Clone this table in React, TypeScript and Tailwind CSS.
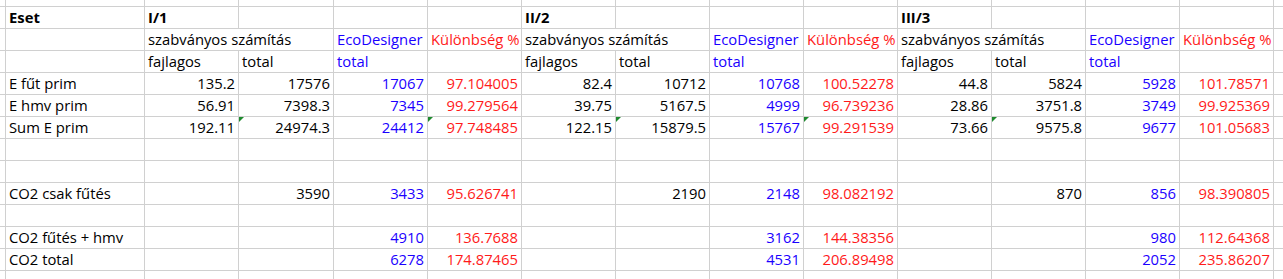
import React from "react";

type Cell = { t?: string; c?: "k" | "b" | "r"; a?: "l" | "r"; bold?: boolean; span?: number; tri?: boolean };

const B = "b";
const R = "r";

const L = (t: string, c: "k" | "b" | "r" = "k", bold = false): Cell => ({ t, c, a: "l", bold });
const N = (t: string, c: "k" | "b" | "r" = "k", tri = false): Cell => ({ t, c, a: "r", tri });
const E: Cell = {};

const rows: Cell[][] = [
  [L("Eset", "k", true), L("I/1", "k", true), E, E, E, L("II/2", "k", true), E, E, E, L("III/3", "k", true), E, E, E],
  [E, { t: "szabványos számítás", a: "l", span: 2 }, L("EcoDesigner", B), L("Különbség %", R), { t: "szabványos számítás", a: "l", span: 2 }, L("EcoDesigner", B), L("Különbség %", R), { t: "szabványos számítás", a: "l", span: 2 }, L("EcoDesigner", B), L("Különbség %", R)],
  [E, L("fajlagos"), L("total"), L("total", B), E, L("fajlagos"), L("total"), L("total", B), E, L("fajlagos"), L("total"), L("total", B), E],
  [L("E fűt prim"), N("135.2"), N("17576"), N("17067", B), N("97.104005", R), N("82.4"), N("10712"), N("10768", B), N("100.52278", R), N("44.8"), N("5824"), N("5928", B), N("101.78571", R)],
  [L("E hmv prim"), N("56.91"), N("7398.3"), N("7345", B), N("99.279564", R), N("39.75"), N("5167.5"), N("4999", B), N("96.739236", R), N("28.86"), N("3751.8"), N("3749", B), N("99.925369", R)],
  [L("Sum E prim"), N("192.11"), N("24974.3", "k", true), N("24412", B), N("97.748485", R, true), N("122.15"), N("15879.5", "k", true), N("15767", B), N("99.291539", R, true), N("73.66"), N("9575.8", "k", true), N("9677", B), N("101.05683", R)],
  [E, E, E, E, E, E, E, E, E, E, E, E, E],
  [E, E, E, E, E, E, E, E, E, E, E, E, E],
  [L("CO2 csak fűtés"), E, N("3590"), N("3433", B), N("95.626741", R), E, N("2190"), N("2148", B), N("98.082192", R), E, N("870"), N("856", B), N("98.390805", R)],
  [E, E, E, E, E, E, E, E, E, E, E, E, E],
  [L("CO2 fűtés + hmv"), E, E, N("4910", B), N("136.7688", R), E, E, N("3162", B), N("144.38356", R), E, E, N("980", B), N("112.64368", R)],
  [L("CO2 total"), E, E, N("6278", B), N("174.87465", R), E, E, N("4531", B), N("206.89498", R), E, E, N("2052", B), N("235.86207", R)],
];

const colorCls = (c?: string) => (c === "b" ? "text-[#1a00ff]" : c === "r" ? "text-[#ff1a1a]" : "text-black");

function DataCell({ cell }: { cell: Cell }) {
  const span = cell.span === 2 ? "col-span-2" : "";
  return (
    <div
      className={`relative bg-white h-[21px] leading-[21px] whitespace-nowrap overflow-visible ${span} ${
        cell.a === "r" ? "text-right pr-[3px]" : "text-left pl-[3px]"
      } ${colorCls(cell.c)} ${cell.bold ? "font-bold" : "font-[450]"}`}
    >
      {cell.tri && (
        <svg className="absolute left-0 top-0" width="5" height="5" viewBox="0 0 5 5">
          <polygon points="0,0 5,0 0,5" fill="#1e8a2e" />
        </svg>
      )}
      {cell.t ?? ""}
    </div>
  );
}

export default function App() {
  const blankRow = Array.from({ length: 15 });
  return (
    <div
      className="w-[1283px] h-[279px] overflow-hidden bg-[#d0d0d0] grid gap-px grid-cols-[5px_138px_93px_94px_93px_93px_93px_93px_93px_93px_93px_93px_93px_93px_1fr] grid-rows-[6px_repeat(12,21px)_1fr] text-[14.8px]"
      style={{ fontFamily: '"Open Sans", "Liberation Sans", sans-serif' }}
    >
      {blankRow.map((_, i) => (
        <div key={`top-${i}`} className="bg-white" />
      ))}
      {rows.map((row, ri) => (
        <React.Fragment key={ri}>
          <div className="bg-white" />
          {row.map((cell, ci) => (
            <DataCell key={ci} cell={cell} />
          ))}
          <div className="bg-white" />
        </React.Fragment>
      ))}
      {blankRow.map((_, i) => (
        <div key={`bot-${i}`} className="bg-white" />
      ))}
    </div>
  );
}
